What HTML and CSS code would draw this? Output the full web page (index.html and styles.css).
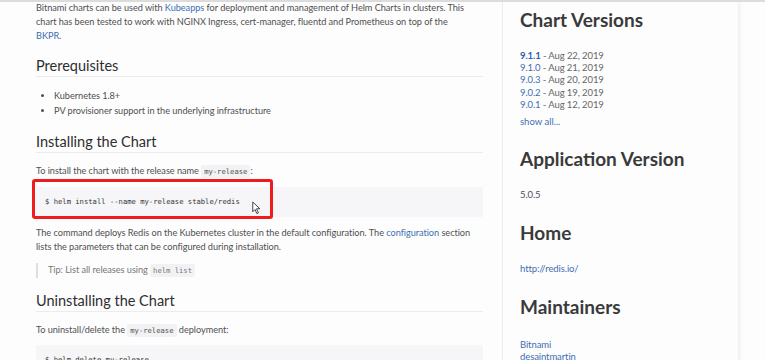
FILE: index.html
```html
<!DOCTYPE html>
<html>
<head>
    <title>redis - Helm Chart</title>
    <link rel="stylesheet" href="styles.css">
</head>
<body>
    <div class="page">
        <div class="readme">
            <p class="intro">Bitnami charts can be used with <a href="#">Kubeapps</a> for deployment and management of Helm Charts in clusters. This chart has been tested to work with NGINX Ingress, cert-manager, fluentd and Prometheus on top of the <a href="#">BKPR</a>.</p>

            <h2>Prerequisites</h2>
            <ul>
                <li>Kubernetes 1.8+</li>
                <li>PV provisioner support in the underlying infrastructure</li>
            </ul>

            <h2>Installing the Chart</h2>
            <p>To install the chart with the release name <code>my-release</code>:</p>
            <div class="highlight">
                <pre>$ helm install --name my-release stable/redis</pre>
                <svg class="cursor" width="9" height="14" viewBox="0 0 12 18">
                    <path d="M1 1 L1 14 L4 11 L6.5 16.5 L8.5 15.5 L6 10 L10.5 10 Z" fill="#fff" stroke="#333" stroke-width="1.2"/>
                </svg>
            </div>
            <p>The command deploys Redis on the Kubernetes cluster in the default configuration. The <a href="#">configuration</a> section lists the parameters that can be configured during installation.</p>
            <blockquote>Tip: List all releases using <code>helm list</code></blockquote>

            <h2>Uninstalling the Chart</h2>
            <p>To uninstall/delete the <code>my-release</code> deployment:</p>
            <div class="code-plain">
                <pre>$ helm delete my-release</pre>
            </div>
        </div>

        <div class="sidebar">
            <h3>Chart Versions</h3>
            <ul class="versions">
                <li><a href="#" class="current">9.1.1</a> - Aug 22, 2019</li>
                <li><a href="#">9.1.0</a> - Aug 21, 2019</li>
                <li><a href="#">9.0.3</a> - Aug 20, 2019</li>
                <li><a href="#">9.0.2</a> - Aug 19, 2019</li>
                <li><a href="#">9.0.1</a> - Aug 12, 2019</li>
            </ul>
            <a href="#" class="show-all">show all...</a>

            <h3>Application Version</h3>
            <p class="side-text">5.0.5</p>

            <h3>Home</h3>
            <p class="side-text"><a href="#">http://redis.io/</a></p>

            <h3>Maintainers</h3>
            <ul class="maintainers">
                <li><a href="#">Bitnami</a></li>
                <li><a href="#">desaintmartin</a></li>
            </ul>
        </div>
    </div>
</body>
</html>
```

FILE: styles.css
```css
body {
    font-family: Lato, "Open Sans", sans-serif;
    margin: 0;
    padding: 0;
    background-color: #fdfdfe;
    color: #505050;
    border-top: 2px solid #dcdcdc;
    height: 358px;
    overflow: hidden;
}
a {
    color: #3d6fb0;
    text-decoration: none;
}
.page {
    display: flex;
    padding-left: 36px;
}
.readme {
    width: 447px;
    font-size: 9.2px;
    letter-spacing: -0.05px;
    line-height: 14px;
}
.readme p {
    margin: 0;
}
.intro {
    margin-top: -1px !important;
    padding-right: 14px;
}
.readme h2 {
    font-size: 14.5px;
    font-weight: 400;
    letter-spacing: 0;
    color: #2e2e2e;
    line-height: 18px;
    margin: 14px 0 0;
    padding-bottom: 1px;
    border-bottom: 1px solid #ececee;
}
.readme ul {
    margin: 11px 0 15px;
    padding-left: 18px;
    line-height: 15px;
}
.readme h2 + p {
    margin-top: 11px;
}
code {
    font-family: "DejaVu Sans Mono", monospace;
    font-size: 7.2px;
    letter-spacing: 0;
    background-color: #f2f2f4;
    padding: 2px 3px;
    border-radius: 2px;
}
.highlight, .code-plain {
    position: relative;
    background-color: #f6f6f8;
    margin: 8px 0 9px;
    padding: 8px 9px;
}
.highlight::after {
    content: "";
    position: absolute;
    left: -4px;
    top: -8px;
    width: 235px;
    height: 34px;
    border: 3px solid #ee1c1c;
    border-radius: 3px;
}
pre {
    margin: 0;
    font-family: "DejaVu Sans Mono", monospace;
    font-size: 7.2px;
    letter-spacing: 0;
    line-height: 14px;
    color: #333;
}
.cursor {
    position: absolute;
    left: 216px;
    top: 14px;
}
blockquote {
    margin: 9px 0 7px;
    padding: 0 10px;
    border-left: 2px solid #dedee0;
    color: #777;
}
.code-plain {
    margin-top: 7px;
}
.sidebar {
    margin-left: 19px;
    width: 218px;
    padding-left: 17px;
    border-left: 1px solid #ececee;
    box-shadow: 2px 0 4px rgba(0, 0, 0, 0.06);
    min-height: 360px;
}
.sidebar h3 {
    font-size: 19px;
    font-weight: 700;
    color: #3a3a3a;
    line-height: 24px;
    margin: 8px 0 0;
}
.sidebar h3:first-child {
    margin-top: 6px;
}
.versions {
    list-style: none;
    padding: 0;
    margin: 18px 0 4px;
    font-size: 9.5px;
    letter-spacing: -0.1px;
    line-height: 12.2px;
    color: #666;
}
.current {
    font-weight: 700;
    color: #2f5fb0;
}
.show-all {
    display: block;
    font-size: 9.5px;
    line-height: 14px;
    margin-bottom: 18px;
}
.side-text {
    font-size: 9.5px;
    letter-spacing: -0.1px;
    line-height: 14px;
    margin: 17px 0 19px;
}
.maintainers {
    list-style: none;
    padding: 0;
    margin: 20px 0 0;
    font-size: 9.5px;
    letter-spacing: -0.1px;
    line-height: 12px;
}
```
